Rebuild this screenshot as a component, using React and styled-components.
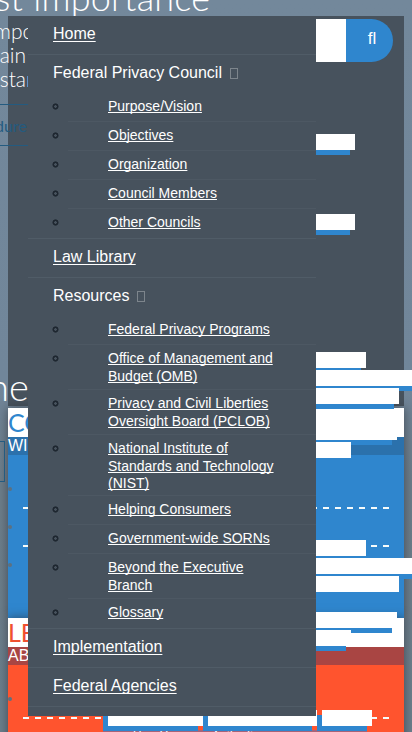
import React from 'react';
import styled, { createGlobalStyle } from 'styled-components';

const GlobalStyle = createGlobalStyle`
  * { box-sizing: border-box; }
  html, body { margin: 0; overflow: hidden; }
  body { font-family: "Liberation Sans", Arial, sans-serif; }
  ul { list-style: none; margin: 0; padding: 0; }
`;

const Page = styled.main`
  position: relative;
  display: flex;
  flex-direction: column;
  width: 412px;
  height: 732px;
  padding: 0 8px;
  overflow: hidden;
  background: linear-gradient(#73889b 0, #71869a 380px, #6e7e8b 480px, #6c7f8d 732px);
`;

const Banner = styled.header`
  flex: none;
  height: 16px;
  margin: 0 -8px;
  padding-left: 8px;
  overflow: hidden;
`;

const BannerTitle = styled.h1`
  margin: -21px 0 0 -13px;
  font: 300 36px/1 Lato, sans-serif;
  letter-spacing: 0.25px;
  color: #fff;
  white-space: nowrap;
`;

const Hero = styled.section`
  flex: none;
  display: flex;
  flex-direction: column;
  align-items: flex-start;
  height: 390px;
  margin-bottom: 2px;
  background: #47525d;
  white-space: nowrap;
  color: #fff;
`;

const Lead = styled.p`
  margin: 3px 0 0 -14px;
  font: 300 21px/24px Lato, sans-serif;
`;

const HeroButton = styled.a`
  display: flex;
  align-items: center;
  width: 60px;
  height: 42px;
  margin: 13px 0 0 -18px;
  padding-left: 4px;
  border: 1px solid #245b80;
  font: 16px Lato, sans-serif;
  color: #245b80;
`;

const HeroHeading = styled.h2`
  margin: auto 0 1px -20px;
  font: 300 38px/1 Lato, sans-serif;
`;

const CardBox = styled.section`
  flex: none;
  height: 210px;
  background: ${p => p.$bg};
  box-shadow: 0 0 10px rgba(40, 45, 50, 0.65);
`;

const CardTitle = styled.h3`
  height: 29px;
  margin: 0;
  overflow: hidden;
  background: #fff;
  font: 25px/29px Lato, sans-serif;
  color: ${p => p.$color};
`;

const CardSubtitle = styled.div`
  height: 18px;
  margin-bottom: 15px;
  background: ${p => p.$bg};
  font-size: 16px;
  line-height: 17px;
  color: #fff;
`;

const CardRow = styled.li`
  height: 38px;
  padding: ${p => (p.$dashed ? '17px 15px 0 0' : '17px 0 0')};
`;

const Dot = styled.div`
  width: 4px;
  height: 4px;
  border-radius: 50%;
  background: #5d7180;
`;

const Dashes = styled.div`
  height: 2px;
  margin: 16px 0 0 15px;
  background: repeating-linear-gradient(90deg, #f5fbfb 0 6px, transparent 6px 12px);
`;

/* Submenu pieces that spill out from beneath the open menu, over the page. */
const Tab = styled.div`
  position: absolute;
  left: ${p => p.$x ?? 300}px;
  top: ${p => p.$y}px;
  width: ${p => p.$w}px;
  height: 16px;
  background: #fff;
  box-shadow: -5px 5px 0 #2f86ce;
`;

const TabLabel = styled.div`
  padding: 20px 0 0 ${p => p.$indent}px;
  font-size: 12px;
  line-height: 1;
  color: #fff;
  white-space: nowrap;
`;

const SideButton = styled.div`
  position: absolute;
  left: -8px;
  top: 441px;
  width: 13px;
  height: 41px;
  border: 1px solid #245b80;
`;

const Strip = styled.div`
  position: absolute;
  left: 103px;
  top: 730px;
  width: 264px;
  height: 2px;
  background: #a86378;
`;

const Search = styled.form`
  position: absolute;
  left: 316px;
  top: 19px;
  display: flex;
  height: 43px;
`;

const SearchField = styled.div`
  width: 30px;
  background: #fff;
`;

const SearchButton = styled.button`
  width: 47px;
  padding: 0 0 3px 5px;
  border: 0;
  border-radius: 0 22px 22px 0;
  background: #2f86ce;
  color: #fff;
  font: 17px "Liberation Sans", sans-serif;
`;

const Menu = styled.nav`
  position: absolute;
  left: 28px;
  top: 16px;
  width: 288px;
  height: 700px;
  background: #47525d;
  color: #fff;
`;

const MenuItem = styled.li`
  border-bottom: 1px solid #505c67;
`;

const Heading = styled.div`
  display: flex;
  align-items: center;
  height: 38px;
  padding: 0 0 2px 25px;
  font-size: 16px;
`;

const Link = styled.a`
  color: #fff;
  text-decoration: underline;
  text-underline-offset: ${p => (p.$large ? 2 : 1)}px;
  text-decoration-thickness: 1px;
  text-decoration-skip-ink: none;
`;

const MissingGlyph = styled.span`
  width: 8px;
  height: 11px;
  margin: 1px 0 0 8px;
  border: 1px solid #7d858c;
`;

const SubItem = styled.li`
  display: flex;
  height: ${p => p.$height}px;
  padding-left: 25px;
`;

const Bullet = styled.span`
  flex: none;
  width: 5px;
  height: 5px;
  margin: 11px 10px 0 0;
  border: 1.5px solid #111922;
  border-radius: 50%;
  box-shadow: 0 0 0 0.4px #111922;
`;

const SubBody = styled.div`
  flex: 1;
  padding: 5px 20px 0 40px;
  border-bottom: 1px solid ${p => (p.$last ? 'transparent' : '#4d5863')};
  font-size: 14px;
  line-height: 17.6px;
  white-space: pre;
`;

const sections = [
  { title: 'Home' },
  {
    title: 'Federal Privacy Council',
    items: ['Purpose/Vision', 'Objectives', 'Organization', 'Council Members', 'Other Councils'],
  },
  { title: 'Law Library' },
  {
    title: 'Resources',
    items: [
      'Federal Privacy Programs',
      'Office of Management and\nBudget (OMB)',
      'Privacy and Civil Liberties\nOversight Board (PCLOB)',
      'National Institute of\nStandards and Technology\n(NIST)',
      'Helping Consumers',
      'Government-wide SORNs',
      'Beyond the Executive\nBranch',
      'Glossary',
    ],
  },
  { title: 'Implementation' },
  { title: 'Federal Agencies' },
];

const heights = { 1: 29, 2: 45, 3: 61 };

const tabs = [
  [134, 55], [214, 55],
  [352, 66], [370, 130], [388, 99], [424, 97], [442, 51],
  [540, 66], [558, 130], [576, 99], [612, 97], [630, 51],
];

function Navigation() {
  return (
    <Menu>
      <ul>
        {sections.map(({ title, items }) => (
          <MenuItem key={title}>
            <Heading>
              {items ? <>{title}<MissingGlyph /></> : <Link $large>{title}</Link>}
            </Heading>
            {items && (
              <ul>
                {items.map((item, i) => (
                  <SubItem key={item} $height={heights[item.split('\n').length]}>
                    <Bullet />
                    <SubBody $last={i === items.length - 1}><Link>{item}</Link></SubBody>
                  </SubItem>
                ))}
              </ul>
            )}
          </MenuItem>
        ))}
      </ul>
    </Menu>
  );
}

function Card({ title, subtitle, bg, titleColor, subtitleBg, dashes }) {
  return (
    <CardBox $bg={bg}>
      <CardTitle $color={titleColor}>{title}</CardTitle>
      <CardSubtitle $bg={subtitleBg}>{subtitle}</CardSubtitle>
      <ul>
        {dashes.map((dashed, i) => (
          <CardRow key={i} $dashed={dashed}>
            <Dot />
            {dashed && <Dashes />}
          </CardRow>
        ))}
      </ul>
    </CardBox>
  );
}

export default function App() {
  return (
    <>
      <GlobalStyle />
      <Page>
        <Banner><BannerTitle>st importance</BannerTitle></Banner>
        <Hero>
          <Lead>mpo<br />&nbsp;ain<br />&nbsp;star</Lead>
          <HeroButton>dure</HeroButton>
          <HeroHeading>ne</HeroHeading>
        </Hero>
        <Card
          title="CO" subtitle="WI" bg="#2f86ce" titleColor="#2f86ce"
          subtitleBg="#2b71ac" dashes={[true, true, false]}
        />
        <Card
          title="LE" subtitle="AB" bg="#ff542e" titleColor="#f05030"
          subtitleBg="#a94543" dashes={[true]}
        />

        <SideButton />
        {tabs.map(([y, w]) => <Tab key={y} $y={y} $w={w} />)}
        <Strip />
        <Tab $x={108} $y={710} $w={95}><TabLabel $indent={25}>How You</TabLabel></Tab>
        <Tab $x={208} $y={710} $w={109}><TabLabel $indent={4}>Authority</TabLabel></Tab>
        <Tab $x={322} $y={710} $w={50} />

        <Search>
          <SearchField />
          <SearchButton type="button">fl</SearchButton>
        </Search>
        <Navigation />
      </Page>
    </>
  );
}
